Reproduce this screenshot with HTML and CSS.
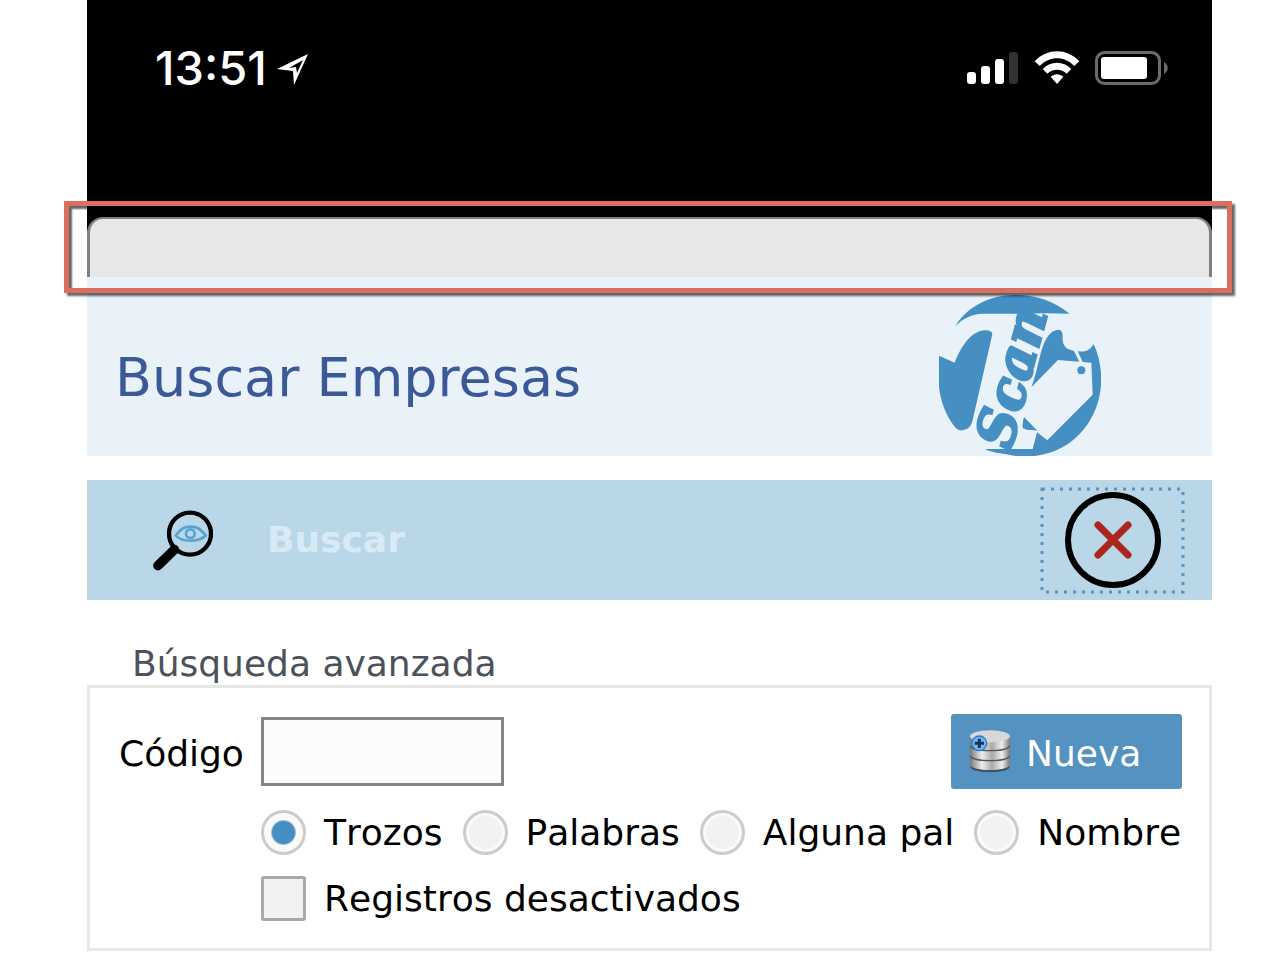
FILE: index.html
```
<!DOCTYPE html>
<html lang="es">
<head>
    <meta charset="UTF-8">
    <meta name="viewport" content="width=device-width, initial-scale=1.0">
    <title>Buscar Empresas</title>
    <link rel="stylesheet" href="styles.css">
</head>
<body>
    <div class="phone">
        <div class="status-bar">
            <div class="status-time">
                <span>13:51</span>
                <svg width="32" height="34" viewBox="0 0 32 34">
                    <path fill="#fff" fill-rule="evenodd" d="M0 18 31 3 17 34 16 20ZM12 17 19 16 20 22 26 9Z"/>
                </svg>
            </div>
            <div class="status-icons">
                <svg class="signal" width="52" height="34" viewBox="0 0 52 34">
                    <g fill="#fff">
                        <rect x="0" y="21" width="9" height="12" rx="3"/>
                        <rect x="14" y="15" width="9" height="18" rx="3"/>
                        <rect x="28" y="8" width="9" height="25" rx="3"/>
                    </g>
                    <rect x="42" y="1" width="9" height="32" rx="3" fill="#333"/>
                </svg>
                <svg class="wifi" width="46" height="34" viewBox="0 0 138 102">
                    <path fill="#fff" d="M2 31C40-9 98-9 136 31L121 45C90 14 48 14 17 45Z"/>
                    <path fill="#fff" d="M26 54C50 29 88 29 112 54L98 68C82 52 56 52 40 68Z"/>
                    <path fill="#fff" d="M50 77C61 67 77 67 88 77L69 99Z"/>
                </svg>
                <svg class="battery" width="73" height="34" viewBox="0 0 73 34">
                    <rect x="1.500" y="1.500" width="63" height="31" rx="8" fill="none" stroke="#6b6b6b" stroke-width="3"/>
                    <rect x="6" y="6" width="46" height="22" rx="3" fill="#fff"/>
                    <path d="M69 11C74 14 74 20 69 23Z" fill="#6b6b6b"/>
                </svg>
            </div>
        </div>

        <!-- Hueco superior con el recuadro de aviso -->
        <div class="top-gap">
            <div class="top-gap-sheet"></div>
            <div class="marker"></div>
        </div>

        <header class="title-bar">
            <h1>Buscar Empresas</h1>
            <svg class="logo" width="162" height="161" viewBox="57 45 486 483" role="img" aria-label="Scan">
                <g fill="#468fc2">
                    <path d="M106 138C140 84 202 45 288 45C350 45 405 65 449 101L381 100L286 101L190 101C154 102 129 116 106 138Z"/>
                    <path d="M57 227 104 248C125 196 154 153 195 151Q216 150 217 163L158 420Q153 448 128 451Q113 453 103 439C78 405 62 366 57 320Z"/>
                    <path d="M334 322C351 278 355 237 369 198C382 163 399 149 417 149Q429 150 428 174C427 193 436 206 452 210L462 213 478 245 414 240Z"/>
                    <path d="M473 213C493 219 512 209 521 192C559 276 549 377 492 447C437 518 342 543 260 523C231 519 207 514 194 507L338 507 351 457 382 481 518 344 514 248 488 246Z"/>
                    <path d="M312 411 352 452C339 450 326 453 309 445Q305 437 312 411Z"/>
                    <circle cx="484" cy="271" r="12"/>
                </g>
                <text class="logo-text" transform="translate(272 512) rotate(-75)">Scan</text>
            </svg>
        </header>

        <form class="search" action="#">
            <div class="search-bar">
                <button type="submit" class="find-btn">
                    <svg width="60" height="61" viewBox="0 0 180 183" aria-hidden="true">
                        <circle cx="111" cy="71" r="63" fill="none" stroke="#000" stroke-width="13"/>
                        <path d="M64 119 15 167" stroke="#000" stroke-width="29" stroke-linecap="round"/>
                        <g fill="none" stroke="#58a3d0" stroke-width="8">
                            <path d="M67 79C83 56 93 50 113 50S143 57 160 79"/>
                            <path d="M67 75C86 98 138 98 160 75"/>
                            <circle cx="112" cy="71" r="13"/>
                        </g>
                    </svg>
                    <span>Buscar</span>
                </button>
                <button type="reset" class="close-btn" aria-label="Cerrar">
                    <svg class="close-frame" aria-hidden="true">
                        <rect x="1" y="1" width="100%" height="100%"/>
                    </svg>
                    <svg width="96" height="96" viewBox="0 0 96 96">
                        <circle cx="48" cy="48" r="45" fill="none" stroke="#000" stroke-width="6"/>
                        <path d="M33 33 63 63M63 33 33 63" stroke="#ab261f" stroke-width="7" stroke-linecap="round"/>
                    </svg>
                </button>
            </div>

            <h2>Búsqueda avanzada</h2>
            <div class="advanced">
                <label class="code-label" for="codigo">Código</label>
                <div class="code-row">
                    <input type="text" id="codigo" class="code-input">
                    <button type="button" class="new-btn">
                        <svg width="44" height="46" viewBox="0 0 132 138" aria-hidden="true">
                            <defs>
                                <linearGradient id="metal">
                                    <stop offset="0" stop-color="#777"/>
                                    <stop offset=".3" stop-color="#eee"/>
                                    <stop offset=".55" stop-color="#aaa"/>
                                    <stop offset=".8" stop-color="#eee"/>
                                    <stop offset="1" stop-color="#777"/>
                                </linearGradient>
                            </defs>
                            <ellipse cx="69" cy="113" rx="59" ry="17" fill="#405466"/>
                            <g fill="url(#metal)">
                                <path d="M9 82V108C17 128 121 128 129 108V82Z"/>
                                <path d="M9 52V79C17 99 121 99 129 79V52Z"/>
                                <path d="M9 22V49C17 69 121 69 129 49V22Z"/>
                            </g>
                            <g fill="none" stroke="#555" stroke-width="4">
                                <path d="M9 80C17 100 121 100 129 80"/>
                                <path d="M9 50C17 70 121 70 129 50"/>
                            </g>
                            <ellipse cx="69" cy="22" rx="60" ry="18" fill="#d8d8d8"/>
                            <circle cx="37" cy="43" r="22" fill="#75b6f2" stroke="#2878cc" stroke-width="4"/>
                            <path d="M37 29V57M23 43H51" stroke="#173653" stroke-width="9"/>
                        </svg>
                        <span>Nueva</span>
                    </button>
                </div>
                <div class="options">
                    <label><input type="radio" name="modo" checked>Trozos</label>
                    <label><input type="radio" name="modo">Palabras</label>
                    <label><input type="radio" name="modo">Alguna pal</label>
                    <label><input type="radio" name="modo">Nombre</label>
                </div>
                <div class="options">
                    <label><input type="checkbox">Registros desactivados</label>
                </div>
            </div>
        </form>
    </div>
</body>
</html>
```

FILE: styles.css
```
* {
    box-sizing: border-box;
}

body {
    margin: 0;
    background-color: #fff;
    color: #000;
    font-family: Verdana, "DejaVu Sans", sans-serif;
    font-size: 36px;
    line-height: 44px;
}

button,
input {
    margin: 0;
    font: inherit;
}

button {
    padding: 0;
    border: 0;
    background: none;
}

svg {
    display: block;
    flex: none;
}

.phone {
    margin: 0 59px 0 87px;
}

/* Barra de estado */
.status-bar {
    display: flex;
    justify-content: space-between;
    align-items: flex-start;
    padding: 46px 44px 127px 68px;
    background-color: #000;
    color: #fff;
}

.status-time {
    display: flex;
    align-items: center;
    gap: 10px;
    font-family: Inter, sans-serif;
    font-size: 47px;
    font-weight: 500;
}

.status-icons {
    display: flex;
    align-items: center;
    gap: 15px;
    padding-top: 5px;
}

/* Hueco superior */
.top-gap {
    position: relative;
    background-color: #000;
}

.top-gap-sheet {
    height: 60px;
    border: 3px solid #808080;
    border-top-width: 2px;
    border-bottom: 0;
    border-radius: 16px 16px 0 0;
    background-color: #e7e7e7;
}

.marker {
    position: absolute;
    top: -16px;
    right: -20px;
    bottom: -16px;
    left: -23px;
    border: 5px solid #dc6e60;
    box-shadow: 3px 3px 2px rgba(0, 0, 0, 0.6), inset 3px 3px 2px rgba(0, 0, 0, 0.6);
}

/* Cabecera */
.title-bar {
    display: flex;
    justify-content: space-between;
    align-items: center;
    padding: 18px 111px 0 28px;
    background-color: #e9f2f8;
}

h1 {
    margin: 0;
    padding-top: 4px;
    color: #3b5998;
    font-size: 54px;
    font-weight: normal;
    line-height: 64px;
}

.logo-text {
    fill: #468fc2;
    stroke: #468fc2;
    stroke-width: 8px;
    font-family: "DejaVu Serif", serif;
    font-size: 158px;
    font-style: italic;
    font-weight: bold;
}

/* Buscador */
.search-bar {
    display: flex;
    justify-content: space-between;
    align-items: center;
    height: 120px;
    margin-top: 24px;
    padding: 0 27px 0 66px;
    background-color: #bad7e8;
}

.find-btn {
    display: flex;
    align-items: center;
    gap: 54px;
    color: #d9eaf7;
    font-weight: bold;
}

.close-btn {
    position: relative;
    padding: 6px 24px 6px 26px;
}

/* Marco punteado del foco */
.close-frame {
    position: absolute;
    top: 2px;
    left: 2px;
    width: calc(100% - 5px);
    height: calc(100% - 5px);
    overflow: visible;
}

.close-frame rect {
    fill: none;
    stroke: #5794c1;
    stroke-width: 3px;
    stroke-dasharray: 3px 6px;
}

h2 {
    margin: 43px 0 0;
    padding-left: 45px;
    color: #4b525b;
    font-size: 36px;
    font-weight: normal;
    line-height: 42px;
}

.advanced {
    display: grid;
    grid-template-columns: 142px 1fr;
    row-gap: 21px;
    align-items: center;
    padding: 26px 27px 27px 29px;
    border: 3px solid #e7e7e7;
}

.code-label,
.new-btn span {
    padding-top: 4px;
}

.code-row {
    display: flex;
    justify-content: space-between;
    align-items: center;
}

.code-input {
    width: 243px;
    height: 69px;
    padding: 0 12px;
    border: 3px solid #858585;
    background-color: #fcfcfc;
}

.new-btn {
    display: flex;
    align-items: center;
    gap: 15px;
    width: 231px;
    height: 75px;
    padding-left: 16px;
    border-radius: 3px;
    background-color: #5492c1;
    color: #fff;
}

.options {
    grid-column: 2;
    display: flex;
    gap: 20px;
    font-kerning: none;
    white-space: nowrap;
}

.options label {
    display: flex;
    align-items: center;
    gap: 18px;
}

.options input {
    flex: none;
    appearance: none;
    width: 45px;
    height: 45px;
    border: 3px solid #a9a9a9;
    border-radius: 3px;
    background-color: #f2f2f2;
}

.options input[type="radio"] {
    border-color: #ccc;
    border-radius: 50%;
    box-shadow: inset 0 0 0 3px #fafafa;
}

.options input[type="radio"]:checked {
    background: radial-gradient(circle, #468fc2 11px, #fafafa 13px);
}
```
